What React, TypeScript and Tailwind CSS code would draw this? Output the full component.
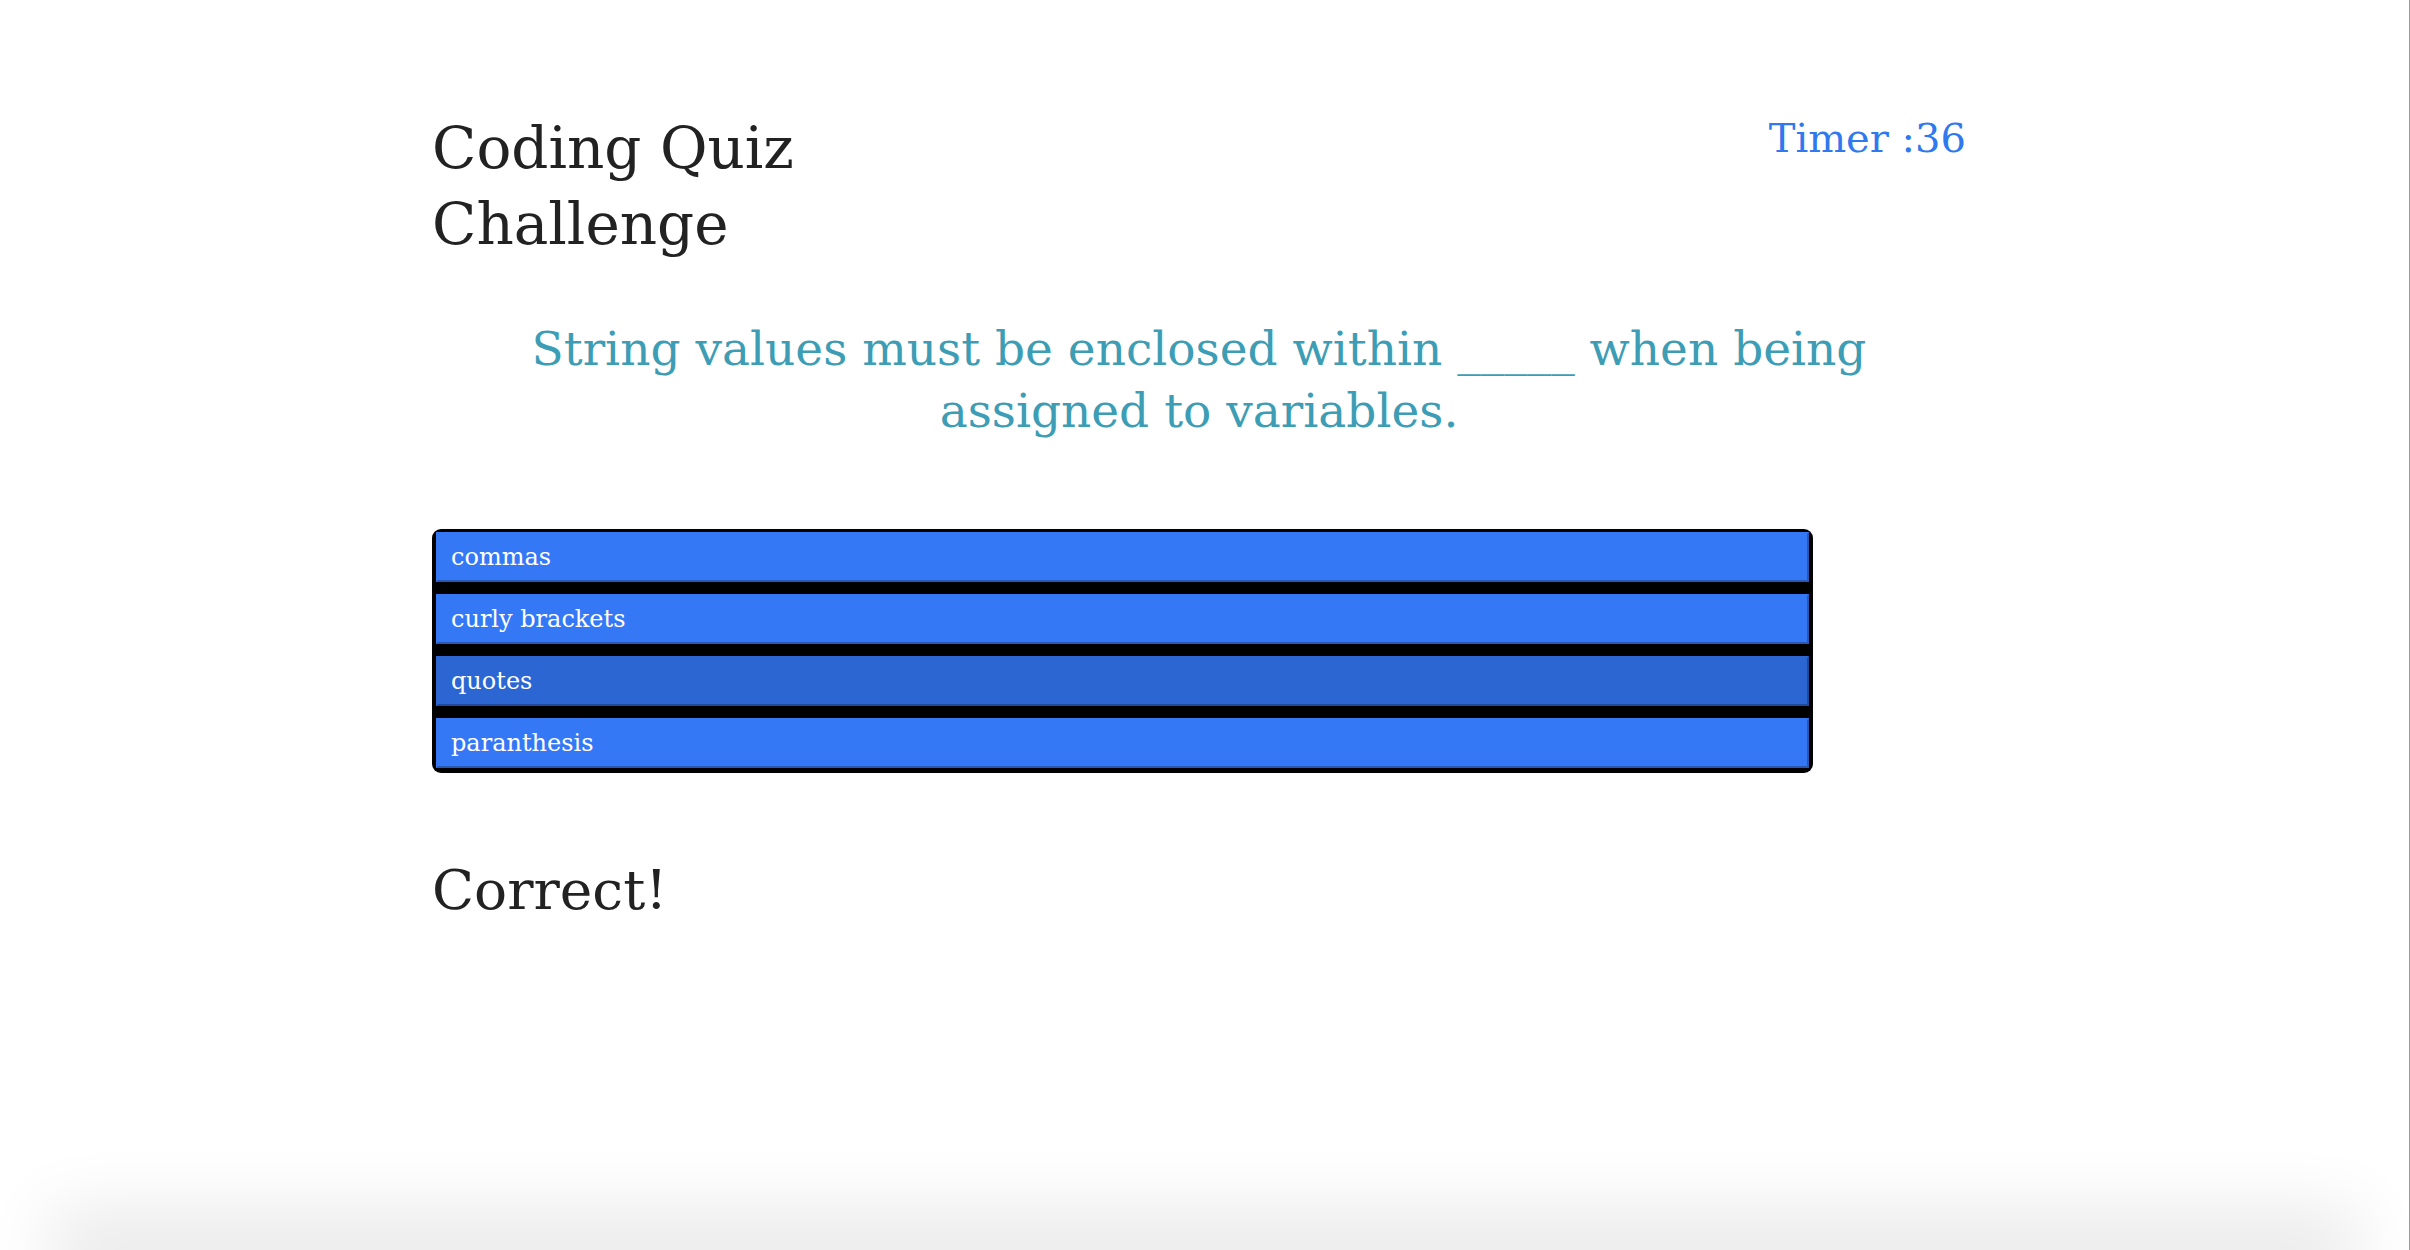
const answers = ["commas", "curly brackets", "quotes", "paranthesis"];

export default function App() {
  return (
    <div className="h-screen overflow-hidden bg-white border-r border-[#9a9a9a] flex flex-col font-['DejaVu_Serif',serif]">
      <main className="flex-1 pl-[432px] pt-[110px]">
        <div className="w-[1534px]">
          <header className="flex items-start justify-between">
            <h1 className="w-[420px] text-[58px] leading-[76px] text-[#222]">
              Coding Quiz Challenge
            </h1>
            <p className="text-[40px] leading-[56px] text-[#2f78ee]">Timer :36</p>
          </header>

          <h2 className="mt-[56px] px-[60px] text-center text-[47px] leading-[62px] text-[#3d9db4]">
            String values must be enclosed within _____ when being assigned to variables.
          </h2>

          <div className="mt-[87px] w-[90%] bg-black rounded-[9px] pt-[3px] pb-[5px] pl-[4px] pr-[4px] flex flex-col gap-[12px]">
            {answers.map((a) =>
              a === "quotes" ? (
                <button
                  key={a}
                  className="h-[50px] text-left pl-[13px] text-[24px] text-white bg-[#2c66d2] border-2 border-t-[#2c66d2] border-l-[#2c66d2] border-b-[#1f4a9c] border-r-[#1f4a9c]"
                >
                  {a}
                </button>
              ) : (
                <button
                  key={a}
                  className="h-[50px] text-left pl-[13px] text-[24px] text-white bg-[#3578f5] border-2 border-t-[#3578f5] border-l-[#3578f5] border-b-[#2758b4] border-r-[#2758b4]"
                >
                  {a}
                </button>
              )
            )}
          </div>

          <p className="mt-[82px] text-[55px] leading-[70px] text-[#222]">Correct!</p>
        </div>
      </main>
      <div className="h-0 mx-[90px] shadow-[0_0_70px_40px_rgba(0,0,0,0.09)]" />
    </div>
  );
}
